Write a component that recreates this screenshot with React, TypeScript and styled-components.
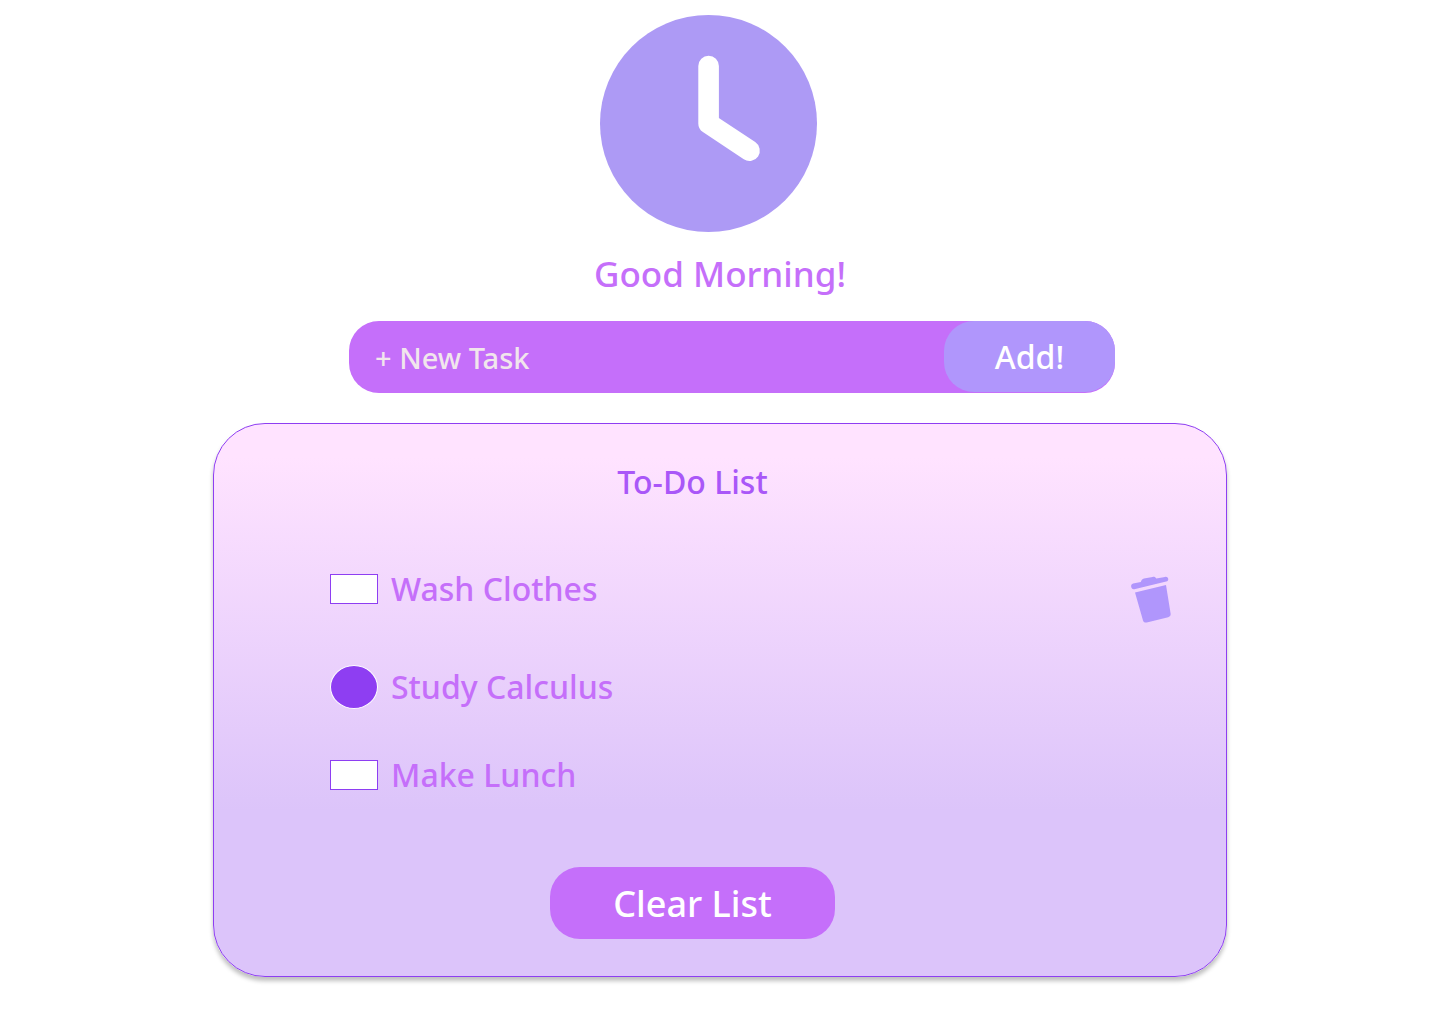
import React from "react";
import styled, { createGlobalStyle } from "styled-components";

const GlobalStyle = createGlobalStyle`
  *, *::before, *::after { box-sizing: border-box; }
  body {
    margin: 0;
    background: #ffffff;
    font-family: "Noto Sans", "Open Sans", sans-serif;
    font-weight: 500;
  }
  button, input { font: inherit; }
  button { border: 0; cursor: pointer; }
`;

const Page = styled.main`
  display: flex;
  flex-direction: column;
  max-width: 1062px;
  margin: 0 auto;
  padding: 15px 24px 48px;
`;

const ClockFrame = styled.div`
  display: flex;
  justify-content: center;
  padding-right: 23px;
`;

const Greeting = styled.h1`
  margin: 18px 0 23px;
  color: #c56ffa;
  font-size: 35px;
  font-weight: 500;
  line-height: 48px;
  text-align: center;
`;

const TaskForm = styled.form`
  display: flex;
  align-items: flex-start;
  height: 72px;
  margin: 0 112px 30px 136px;
  border-radius: 30px;
  background: #c56ffa;
`;

const TaskInput = styled.input`
  flex: 1;
  min-width: 0;
  height: 72px;
  padding: 0 26px;
  border: 0;
  border-radius: 30px;
  outline: none;
  background: transparent;
  color: #f1e6ec;
  font-size: 29px;

  &::placeholder {
    color: #f1e6ec;
    opacity: 1;
  }
`;

const AddButton = styled.button`
  width: 171px;
  height: 71px;
  padding: 0;
  border-radius: 30px;
  background: #b096fc;
  color: #ffffff;
  font-size: 32px;
`;

const Card = styled.section`
  display: flex;
  flex-direction: column;
  align-items: center;
  padding: 38px 55px 37px 0;
  border: 1px solid #8e3ef2;
  border-radius: 52px;
  background: linear-gradient(#ffe3ff 6%, #dcc4fa 70%);
  box-shadow: 0 4px 4px rgba(0, 0, 0, 0.25);
`;

const CardTitle = styled.h2`
  margin: 0;
  color: #a957f8;
  font-size: 32px;
  font-weight: 500;
  line-height: 40px;
`;

const TaskList = styled.ul`
  display: flex;
  flex-direction: column;
  align-self: stretch;
  gap: 38px;
  margin: 72px 0 67px;
  padding: 0 0 0 116px;
  list-style: none;
`;

const TaskRow = styled.li<{ $align: "start" | "center" }>`
  display: flex;
  align-items: ${(p) => p.$align};
  justify-content: space-between;
  min-height: 50px;
`;

const TaskLabel = styled.label`
  display: flex;
  align-items: center;
  gap: 13px;
  color: #c56ffa;
  font-size: 32px;
  line-height: 30px;
  cursor: pointer;
`;

const Tick = styled.input`
  appearance: none;
  flex: none;
  width: 48px;
  height: 30px;
  margin: 0;
  border: 1px solid #8e3ef2;
  background: #ffffff;
  cursor: pointer;

  &:checked {
    height: 44px;
    border-color: #ffffff;
    border-radius: 50%;
    background: #8e3ef2;
  }
`;

const DeleteButton = styled.button`
  display: flex;
  padding: 2px 0 0;
  background: transparent;
`;

const ClearButton = styled.button`
  width: 285px;
  height: 72px;
  padding: 0;
  border-radius: 30px;
  background: #c56ffa;
  color: #ffffff;
  font-size: 36px;
`;

const ClockIcon = () => (
  <svg width="217" height="217" viewBox="0 0 217 217" aria-hidden="true">
    <circle cx="108.5" cy="108.5" r="108.5" fill="#ad9af5" />
    <path
      d="M108.6 51V108.5L149.5 135.7"
      fill="none"
      stroke="#ffffff"
      strokeWidth="20.6"
      strokeLinecap="round"
      strokeLinejoin="round"
    />
  </svg>
);

const TrashIcon = () => (
  <svg width="40" height="47" viewBox="0 0 40 47" fill="#b096fc" aria-hidden="true">
    <path d="M2.1 7.5 9.8 5.9C10.4 4.3 11.2 3.1 13 2.6L21.6 .9C23.3 .6 24.5 1.2 25.3 2.6L34 .9C37.6.3 38.5 4.8 35.2 5.6L3.3 13.2C-.1 13.9-1.2 8.3 2.1 7.5Z" />
    <path d="M4 16.4 35 9 39.6 37.6C39.9 39.6 39.2 40.7 37.2 41.2L15.8 46.4C13.9 46.9 12.6 46.2 12 44.4Z" />
  </svg>
);

const tasks = [
  { id: "wash", name: "Wash Clothes", done: false, removable: true },
  { id: "study", name: "Study Calculus", done: true, removable: false },
  { id: "lunch", name: "Make Lunch", done: false, removable: false },
];

export default function App() {
  return (
    <>
      <GlobalStyle />
      <Page>
        <ClockFrame>
          <ClockIcon />
        </ClockFrame>
        <Greeting>Good Morning!</Greeting>
        <TaskForm onSubmit={(e) => e.preventDefault()}>
          <TaskInput type="text" placeholder="+ New Task" aria-label="New Task" />
          <AddButton type="submit">Add!</AddButton>
        </TaskForm>
        <Card>
          <CardTitle>To-Do List</CardTitle>
          <TaskList>
            {tasks.map((task) => (
              <TaskRow key={task.id} $align={task.removable ? "start" : "center"}>
                <TaskLabel htmlFor={task.id}>
                  <Tick id={task.id} type="checkbox" defaultChecked={task.done} />
                  {task.name}
                </TaskLabel>
                {task.removable && (
                  <DeleteButton type="button" aria-label={`Delete ${task.name}`}>
                    <TrashIcon />
                  </DeleteButton>
                )}
              </TaskRow>
            ))}
          </TaskList>
          <ClearButton type="button">Clear List</ClearButton>
        </Card>
      </Page>
    </>
  );
}
